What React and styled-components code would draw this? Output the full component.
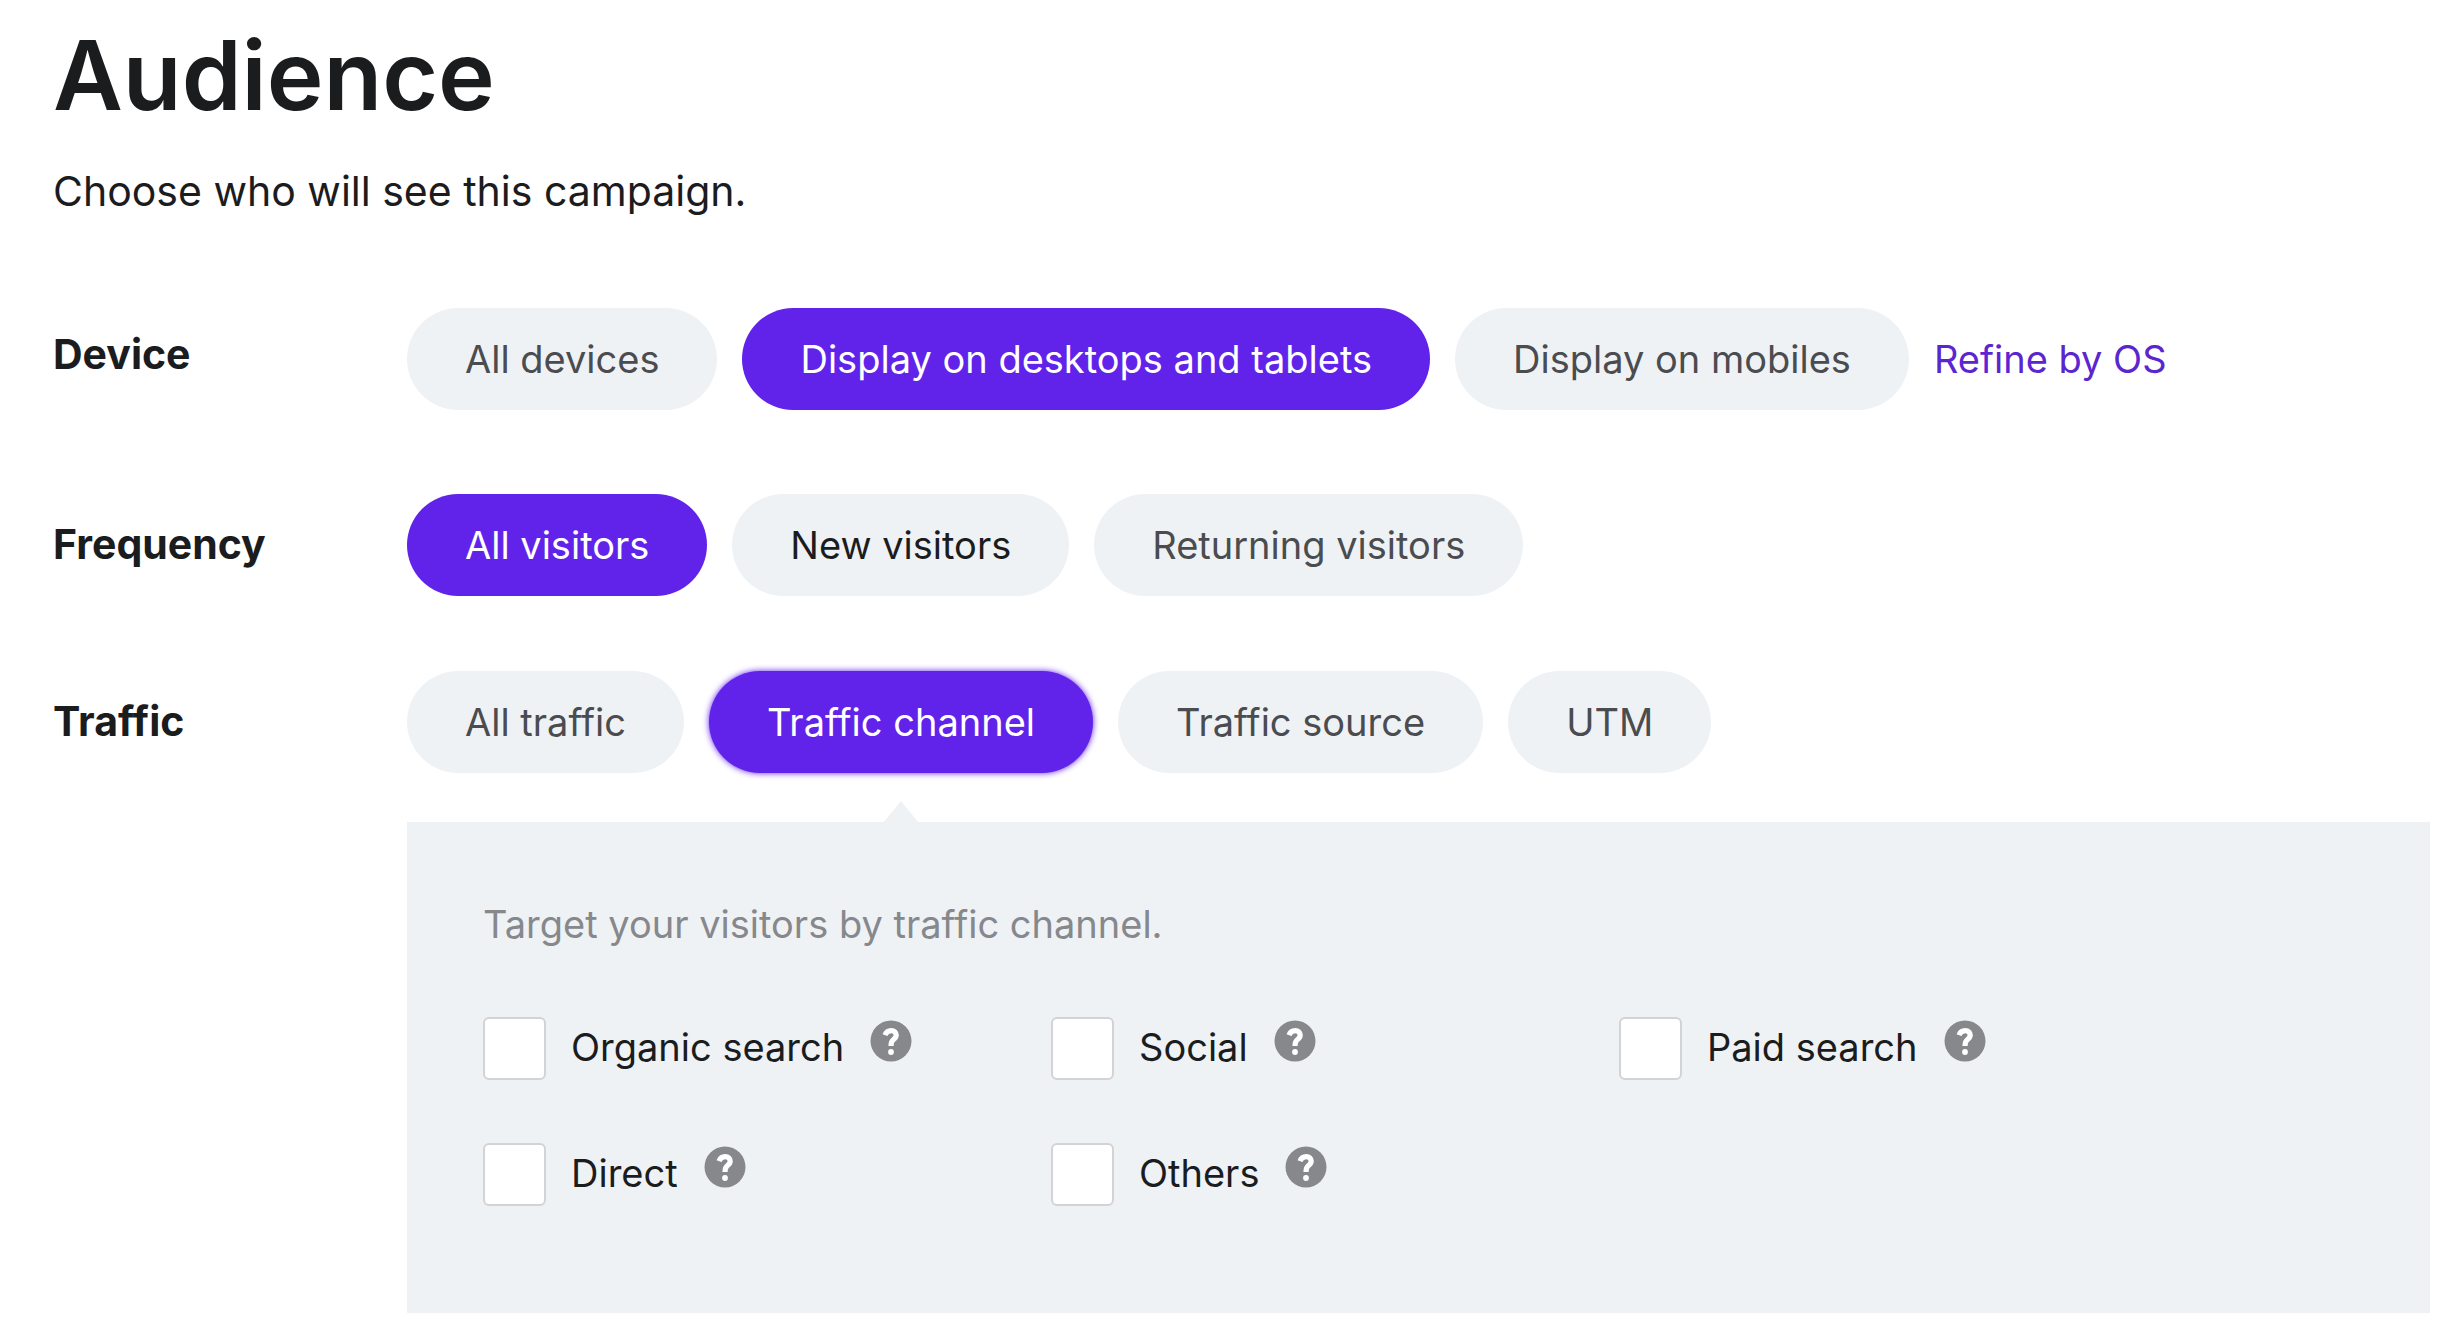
import React, { useState } from 'react'
import styled, { createGlobalStyle, css } from 'styled-components'

let theme = {
  primary: `#6123ea`,
  link: `#5b25cf`,
  text: `#1b1c1e`,
  muted: `#4a4c50`,
  hint: `#86888c`,
  surface: `#eff2f5`,
  border: `#d2d3d6`,
}

let GlobalStyle = createGlobalStyle`
  body {
    margin: 0;
    background: #fff;
    color: ${theme.text};
    font-family: Inter, sans-serif;
  }
`

let Page = styled.main`
  padding: 19px 24px 24px 53px;
`

let Title = styled.h1`
  margin: 0;
  font-size: 96px;
  line-height: 112px;
  font-weight: 600;
`

let Subtitle = styled.p`
  margin: 35px 0 0;
  font-size: 41px;
  line-height: 50px;
`

let Row = styled.section`
  display: grid;
  grid-template-columns: 354px 1fr;
  margin-top: ${p => p.$gap}px;
`

let RowLabel = styled.h2`
  margin: 0;
  font-size: 41px;
  line-height: ${p => p.$lineHeight || 101}px;
  font-weight: 700;
`

let Options = styled.div`
  display: flex;
  flex-wrap: wrap;
  align-items: center;
  gap: 25px;
`

let Pill = styled.button`
  position: relative;
  height: 102px;
  padding: 0 58px;
  border: 0;
  border-radius: 51px;
  background: ${theme.surface};
  color: ${p => (p.$strong ? theme.text : theme.muted)};
  font: inherit;
  font-size: 38px;
  white-space: nowrap;
  cursor: pointer;
  ${p => p.$active && css`
    background: ${theme.primary};
    color: #fff;
  `}
  ${p => p.$active && p.$pointer && css`
    box-shadow: 0 0 6px ${theme.primary};
    &::after {
      content: '';
      position: absolute;
      top: calc(100% + 28px);
      left: calc(50% - 18px);
      width: 36px;
      height: 22px;
      background: ${theme.surface};
      clip-path: polygon(50% 0, 100% 100%, 0 100%);
    }
  `}
`

let RefineLink = styled.a`
  color: ${theme.link};
  font-size: 38px;
  text-decoration: none;
`

let Panel = styled.div`
  grid-column: 2;
  margin-top: 49px;
  padding: 77px 76px 107px;
  background: ${theme.surface};
`

let Hint = styled.p`
  margin: 0;
  color: ${theme.hint};
  font-size: 38px;
  line-height: 50px;
`

let Channels = styled.div`
  display: grid;
  grid-template-columns: repeat(auto-fill, 568px);
  row-gap: 63px;
  margin-top: 68px;
`

let Channel = styled.div`
  display: flex;
  align-items: center;
  height: 63px;
  font-size: 38px;
  line-height: 60px;
`

let ChannelName = styled.label`
  align-self: flex-start;
`

let Checkbox = styled.input`
  appearance: none;
  width: 63px;
  height: 63px;
  margin: 0 25px 0 0;
  border: 2px solid ${theme.border};
  border-radius: 6px;
  background: #fff;
  &:checked {
    background: ${theme.primary};
  }
`

let Help = styled.button`
  display: flex;
  align-self: flex-start;
  margin: 3px 0 0 26px;
  padding: 0;
  border: 0;
  background: none;
  color: ${theme.hint};
`

let HelpIcon = () => (
  <svg width="42" height="42" viewBox="0 0 42 42" fill="none" aria-hidden="true">
    <circle cx="21" cy="21" r="20.5" fill="currentColor" />
    <path
      d="M15 15.2C16.2 11.8 18.4 10.6 21.2 10.6C24.4 10.6 26.2 12.4 26.2 15C26.2 17.4 25 18.5 23.3 19.8C21.4 21.2 21 22.3 21 26"
      stroke="#fff"
      strokeWidth="5.2"
    />
    <circle cx="21" cy="32" r="2.9" fill="#fff" />
  </svg>
)

let PillGroup = ({ label, options, initial, strong, pointer, children }) => {
  let [active, setActive] = useState(initial)
  return (
    <Options role="group" aria-label={label}>
      {options.map(option => (
        <Pill
          key={option}
          type="button"
          aria-pressed={option === active}
          $active={option === active}
          $strong={option === strong}
          $pointer={pointer}
          onClick={() => setActive(option)}
        >
          {option}
        </Pill>
      ))}
      {children}
    </Options>
  )
}

let channels = [`Organic search`, `Social`, `Paid search`, `Direct`, `Others`]

export default () => (
  <>
    <GlobalStyle />
    <Page>
      <Title>Audience</Title>
      <Subtitle>Choose who will see this campaign.</Subtitle>
      <Row $gap={92}>
        <RowLabel $lineHeight={92}>Device</RowLabel>
        <PillGroup
          label="Device"
          options={[`All devices`, `Display on desktops and tablets`, `Display on mobiles`]}
          initial="Display on desktops and tablets"
        >
          <RefineLink href="#os">Refine by OS</RefineLink>
        </PillGroup>
      </Row>
      <Row $gap={84}>
        <RowLabel>Frequency</RowLabel>
        <PillGroup
          label="Frequency"
          options={[`All visitors`, `New visitors`, `Returning visitors`]}
          initial="All visitors"
          strong="New visitors"
        />
      </Row>
      <Row $gap={75}>
        <RowLabel>Traffic</RowLabel>
        <PillGroup
          label="Traffic"
          options={[`All traffic`, `Traffic channel`, `Traffic source`, `UTM`]}
          initial="Traffic channel"
          pointer
        />
        <Panel>
          <Hint>Target your visitors by traffic channel.</Hint>
          <Channels>
            {channels.map(name => (
              <Channel key={name}>
                <Checkbox type="checkbox" id={name} />
                <ChannelName htmlFor={name}>{name}</ChannelName>
                <Help type="button" aria-label={`About ${name}`}>
                  <HelpIcon />
                </Help>
              </Channel>
            ))}
          </Channels>
        </Panel>
      </Row>
    </Page>
  </>
)
